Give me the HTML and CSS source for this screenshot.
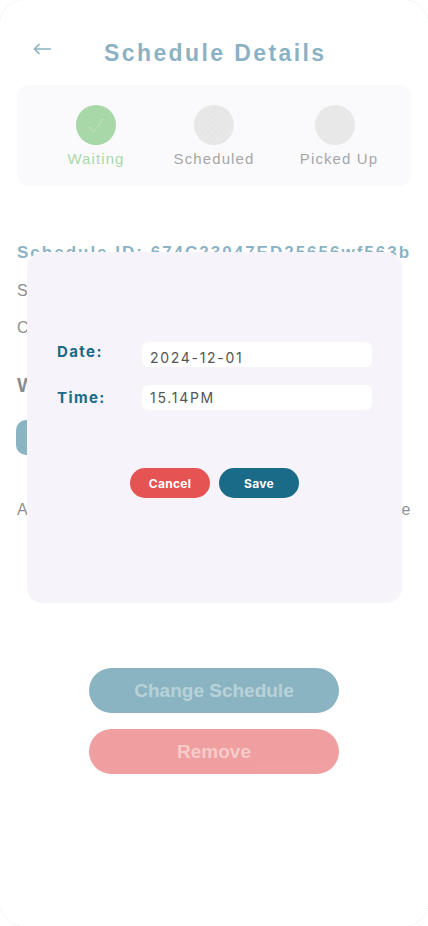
FILE: index.html
```html
<!DOCTYPE html>
<html lang="en">
<head>
    <meta charset="UTF-8">
    <meta name="viewport" content="width=device-width, initial-scale=1.0">
    <title>Schedule Details</title>
    <link rel="stylesheet" href="styles.css">
</head>
<body>
    <div class="screen">
        <div class="page">
            <header class="top-bar">
                <svg class="back" width="18" height="12" viewBox="0 0 18 12" fill="none" stroke="#1a6b88" stroke-width="1.6">
                    <path d="M18 6H1.5M6.5 1L1.5 6l5 5"/>
                </svg>
                <h1>Schedule Details</h1>
            </header>

            <section class="status-card">
                <div class="step step-done">
                    <div class="dot">
                        <svg width="40" height="40" viewBox="0 0 40 40" fill="none" stroke="#a7d1a7" stroke-width="1" stroke-dasharray="2 1">
                            <path d="M13 22l5 5 9-13"/>
                        </svg>
                    </div>
                    <span>Waiting</span>
                </div>
                <div class="step">
                    <div class="dot dot-dotted"></div>
                    <span>Scheduled</span>
                </div>
                <div class="step step-last">
                    <div class="dot"></div>
                    <span>Picked Up</span>
                </div>
            </section>

            <section class="details">
                <h2>Schedule ID: 674C23047ED25656wf563b</h2>
                <p class="first">Status: Waiting</p>
                <p>Created: 2024-11-28</p>
                <h3>Waste Type</h3>
                <div class="tag">Plastic</div>
                <p class="note">A pickup can be changed any time before the date</p>
            </section>

            <div class="actions">
                <button class="btn btn-change">Change Schedule</button>
                <button class="btn btn-remove">Remove</button>
            </div>
        </div>

        <div class="modal">
            <div class="field field-date">
                <label for="date">Date:</label>
                <input id="date" type="text" value="2024-12-01">
            </div>
            <div class="field">
                <label for="time">Time:</label>
                <input id="time" type="text" value="15.14PM">
            </div>
            <div class="modal-actions">
                <button class="modal-btn cancel">Cancel</button>
                <button class="modal-btn save">Save</button>
            </div>
        </div>
    </div>
</body>
</html>
```

FILE: styles.css
```css
* {
    box-sizing: border-box;
}

body {
    margin: 0;
    background: #fff;
    font-family: "Liberation Sans", Arial, sans-serif;
}

.screen {
    position: relative;
    width: 428px;
    height: 926px;
    overflow: hidden;
}

/* faint rounded frame, only the corners are in view */
.screen::before {
    content: "";
    position: absolute;
    inset: -1px;
    border: 1px dotted #e8efef;
    border-radius: 26px;
}

/* everything behind the modal is dimmed */
.page {
    padding: 0 17px;
    opacity: 0.5;
}

.top-bar {
    display: flex;
    align-items: center;
    height: 85px;
    padding: 20px 0 0 16px;
}

.back {
    margin-top: -8px;
}

.top-bar h1 {
    margin: 0 0 0 53px;
    font-size: 23px;
    line-height: 26px;
    letter-spacing: 2.4px;
    color: #17688a;
}

.status-card {
    display: grid;
    grid-template-columns: 118px 118px 132px;
    height: 101px;
    padding: 20px 0 0 20px;
    background: #f7f7fb;
    border-radius: 12px;
}

.step {
    display: flex;
    flex-direction: column;
    align-items: center;
    gap: 5px;
    font-size: 15px;
    line-height: 18px;
    letter-spacing: 1.1px;
    color: #4d4d4d;
}

.dot {
    width: 40px;
    height: 40px;
    border-radius: 50%;
    background: #d3d3d3;
}

.step-last .dot {
    margin-right: 8px;
}

.dot-dotted {
    background-color: #d3d3d3;
    background-image:
        radial-gradient(#b7c9c1 0.6px, transparent 0.8px),
        radial-gradient(#b7c9c1 0.6px, transparent 0.8px);
    background-size: 6px 6px;
    background-position: 0 0, 3px 3px;
}

.step-done {
    color: #53b153;
}

.step-done .dot {
    background: #53b153;
}

.details {
    padding-top: 57px;
    color: #1a1a1a;
}

.details h2 {
    margin: 0;
    font-size: 17px;
    line-height: 20px;
    letter-spacing: 2px;
    white-space: nowrap;
    color: #17688a;
}

.details p {
    margin: 15px 0 0;
    font-size: 16px;
    line-height: 22px;
}

.details .first {
    margin-top: 17px;
}

.details h3 {
    margin: 33px 0 0;
    font-size: 20px;
    line-height: 26px;
}

.tag {
    width: 90px;
    height: 35px;
    margin: 22px 0 0 -1px;
    padding: 8px 16px;
    border-radius: 10px;
    background: #1a6b88;
    font-size: 14px;
    color: #fff;
}

.details .note {
    margin-top: 44px;
    letter-spacing: 0.5px;
    text-align: justify;
    text-align-last: justify;
}

.actions {
    display: flex;
    flex-direction: column;
    align-items: center;
    gap: 16px;
    margin-top: 147px;
}

.btn {
    width: 250px;
    height: 45px;
    border: none;
    border-radius: 23px;
    font-family: inherit;
    font-size: 19px;
    font-weight: 700;
}

.btn-change {
    background: #1a6b88;
    color: #73a7b5;
}

.btn-remove {
    background: #e14141;
    color: #ef9999;
}

.modal {
    position: absolute;
    left: 27px;
    top: 252px;
    width: 375px;
    height: 351px;
    padding: 90px 30px 0;
    background: #f6f3fb;
    border-radius: 16px;
    font-family: Inter, sans-serif;
}

.field {
    display: flex;
    align-items: center;
    height: 25px;
    margin-bottom: 18px;
}

.field label {
    width: 85px;
    font-size: 15px;
    font-weight: 700;
    letter-spacing: 1.4px;
    color: #1a6b88;
}

.field-date label {
    margin-bottom: 7px;
}

.field input {
    width: 230px;
    height: 25px;
    padding: 0 8px;
    border: none;
    border-radius: 6px;
    background: #fff;
    font-family: inherit;
    font-size: 14px;
    letter-spacing: 1.7px;
    color: #555;
}

.field-date input {
    padding-top: 5px;
}

.modal-actions {
    display: flex;
    justify-content: center;
    gap: 9px;
    margin-top: 58px;
}

.modal-btn {
    width: 80px;
    height: 30px;
    border: none;
    border-radius: 15px;
    font-family: inherit;
    font-size: 12px;
    font-weight: 700;
    letter-spacing: 0.3px;
    color: #fff;
}

.cancel {
    background: #e55353;
}

.save {
    background: #1a6b88;
}
```
